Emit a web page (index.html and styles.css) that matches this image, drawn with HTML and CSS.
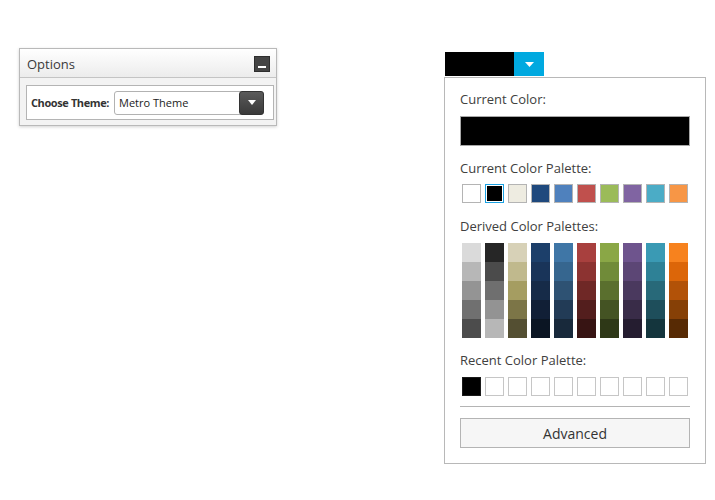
FILE: index.html
```html
<!DOCTYPE html>
<html>
<head>
<meta charset="utf-8">
<link rel="stylesheet" href="styles.css">
</head>
<body>
<div class="page">
  <div class="options">
    <div class="opt-header">
      <span class="opt-title">Options</span>
      <span class="min-btn"><span class="min-bar"></span></span>
    </div>
    <div class="opt-body">
      <div class="opt-row">
        <span class="opt-label">Choose Theme:</span>
        <div class="combo">
          <span class="combo-text">Metro Theme</span>
          <span class="combo-btn"><svg width="8" height="5" viewBox="0 0 8 5"><path d="M0 0H8L4 5Z" fill="#fff"/></svg></span>
        </div>
      </div>
    </div>
  </div>

  <div class="picker">
    <div class="picker-btn">
      <span class="picker-color"></span>
      <span class="picker-arrow"><svg width="9" height="5" viewBox="0 0 9 5"><path d="M0 0H9L4.5 5Z" fill="#fff"/></svg></span>
    </div>
    <div class="popup">
      <div class="label first">Current Color:</div>
      <div class="current-bar"></div>

      <div class="label">Current Color Palette:</div>
      <div class="swatches">
        <span class="sw" style="background:#ffffff"></span>
        <span class="sw selected"></span>
        <span class="sw" style="background:#eeece1"></span>
        <span class="sw" style="background:#1f497d"></span>
        <span class="sw" style="background:#4f81bd"></span>
        <span class="sw" style="background:#c0504d"></span>
        <span class="sw" style="background:#9bbb59"></span>
        <span class="sw" style="background:#8064a2"></span>
        <span class="sw" style="background:#4bacc6"></span>
        <span class="sw" style="background:#f79646"></span>
      </div>

      <div class="label after-sw">Derived Color Palettes:</div>
      <div class="derived">
        <div class="dcol"><span style="background:#dadada"></span><span style="background:#b7b7b7"></span><span style="background:#949494"></span><span style="background:#707070"></span><span style="background:#4c4c4c"></span></div>
        <div class="dcol"><span style="background:#262626"></span><span style="background:#4b4b4b"></span><span style="background:#6f6f6f"></span><span style="background:#939393"></span><span style="background:#b7b7b7"></span></div>
        <div class="dcol"><span style="background:#d7d1b7"></span><span style="background:#c0b98d"></span><span style="background:#a59d61"></span><span style="background:#7c7547"></span><span style="background:#544f32"></span></div>
        <div class="dcol"><span style="background:#1c3f6a"></span><span style="background:#193459"></span><span style="background:#162b48"></span><span style="background:#111f36"></span><span style="background:#0b1523"></span></div>
        <div class="dcol"><span style="background:#3f76a6"></span><span style="background:#36668f"></span><span style="background:#2e5273"></span><span style="background:#223b56"></span><span style="background:#18293b"></span></div>
        <div class="dcol"><span style="background:#a8403e"></span><span style="background:#8c3331"></span><span style="background:#6f2826"></span><span style="background:#531e1d"></span><span style="background:#371413"></span></div>
        <div class="dcol"><span style="background:#8aa746"></span><span style="background:#708b39"></span><span style="background:#5a6f2e"></span><span style="background:#445323"></span><span style="background:#2e3817"></span></div>
        <div class="dcol"><span style="background:#6e548d"></span><span style="background:#5c4675"></span><span style="background:#4a395e"></span><span style="background:#392c48"></span><span style="background:#251d30"></span></div>
        <div class="dcol"><span style="background:#3a9ab4"></span><span style="background:#2e8196"></span><span style="background:#286979"></span><span style="background:#1e4e5b"></span><span style="background:#14353d"></span></div>
        <div class="dcol"><span style="background:#f7821e"></span><span style="background:#dc6609"></span><span style="background:#b25208"></span><span style="background:#864006"></span><span style="background:#572a04"></span></div>
      </div>

      <div class="label">Recent Color Palette:</div>
      <div class="swatches recent">
        <span class="sw filled"></span>
        <span class="sw"></span>
        <span class="sw"></span>
        <span class="sw"></span>
        <span class="sw"></span>
        <span class="sw"></span>
        <span class="sw"></span>
        <span class="sw"></span>
        <span class="sw"></span>
        <span class="sw"></span>
      </div>

      <div class="separator"></div>
      <div class="advanced">Advanced</div>
    </div>
  </div>
</div>
</body>
</html>
```

FILE: styles.css
```css
* { box-sizing: border-box; }

html, body {
  margin: 0;
  padding: 0;
  background: #ffffff;
}

body {
  font-family: "Open Sans", "Liberation Sans", sans-serif;
  color: #333333;
}

.page {
  display: flex;
  align-items: flex-start;
  padding: 48px 0 0 19px;
}

/* ---------- Options panel ---------- */
.options {
  width: 258px;
  border: 1px solid #b9b9b9;
  background: #f3f3f3;
  box-shadow: 0 1px 3px rgba(0, 0, 0, 0.18);
}

.opt-header {
  height: 29px;
  display: flex;
  align-items: center;
  justify-content: space-between;
  padding: 0 6px 0 7px;
  background: linear-gradient(#ffffff, #ececec);
  border-bottom: 1px solid #c4c4c4;
}

.opt-title {
  font-size: 13px;
  color: #3a3a3a;
  margin-top: 1px;
}

.min-btn {
  width: 16px;
  height: 16px;
  background: #444444;
  border: 1px solid #2e2e2e;
  display: flex;
  align-items: flex-end;
  justify-content: center;
  padding-bottom: 3px;
  margin-top: 2px;
}

.min-bar {
  width: 8px;
  height: 2px;
  background: #ffffff;
}

.opt-body {
  padding: 7px 2px 5px 6px;
}

.opt-row {
  display: flex;
  align-items: center;
  height: 35px;
  border: 1px solid #b4b4b4;
  background: #ffffff;
  padding: 0 9px 0 4px;
}

.opt-label {
  font-size: 11px;
  font-weight: bold;
  color: #333333;
  letter-spacing: -0.4px;
}

.combo {
  width: 150px;
  height: 24px;
  margin-left: auto;
  display: flex;
  align-items: stretch;
  border: 1px solid #b2b2b2;
  border-radius: 3px;
  background: #ffffff;
}

.combo-text {
  flex: 1;
  display: flex;
  align-items: center;
  padding-left: 4px;
  font-size: 11px;
  color: #222222;
}

.combo-btn {
  width: 25px;
  margin: -1px -1px -1px 0;
  border-radius: 3px;
  background: linear-gradient(#5a5a5a, #3a3a3a);
  border: 1px solid #333333;
  display: flex;
  align-items: center;
  justify-content: center;
}

/* ---------- Color picker ---------- */
.picker {
  margin-left: 167px;
  margin-top: 4px;
}

.picker-btn {
  display: flex;
  height: 24px;
  margin-left: 1px;
}

.picker-color {
  width: 69px;
  background: #000000;
}

.picker-arrow {
  width: 30px;
  background: #00a9e0;
  display: flex;
  align-items: center;
  justify-content: center;
}

.popup {
  width: 262px;
  margin-top: 1px;
  border: 1px solid #b8b8b8;
  background: #ffffff;
  padding: 11px 15px 15px 15px;
  display: flex;
  flex-direction: column;
}

.label {
  font-size: 13px;
  line-height: 20px;
  color: #404040;
  margin-top: 12px;
}

.label.first {
  margin-top: 0;
}

.label.after-sw {
  margin-top: 13px;
}

.current-bar {
  margin-top: 7px;
  height: 30px;
  background: #000000;
  border: 1px solid #a8a8a8;
}

.swatches {
  display: flex;
  gap: 4px;
  padding-left: 2px;
  margin-top: 6px;
}

.sw {
  width: 19px;
  height: 19px;
  border: 1px solid #b4b4b4;
  background: #ffffff;
}

.sw.selected {
  border: 1px solid #1ba1e2;
  background: #000000;
  box-shadow: inset 0 0 0 1px #ffffff;
}

.recent {
  margin-top: 7px;
}

.recent .sw {
  border-color: #c6c6c6;
}

.recent .sw.filled {
  background: #000000;
  border-color: #1a1a1a;
}

.derived {
  display: flex;
  gap: 4px;
  padding-left: 2px;
  margin-top: 7px;
}

.dcol {
  display: flex;
  flex-direction: column;
  width: 19px;
}

.dcol span {
  height: 19px;
}

.separator {
  margin-top: 10px;
  height: 1px;
  background: #b4b4b4;
}

.advanced {
  margin-top: 11px;
  height: 30px;
  border: 1px solid #b4b4b4;
  background: #f6f6f6;
  display: flex;
  align-items: center;
  justify-content: center;
  font-size: 14px;
  color: #333333;
}
```
